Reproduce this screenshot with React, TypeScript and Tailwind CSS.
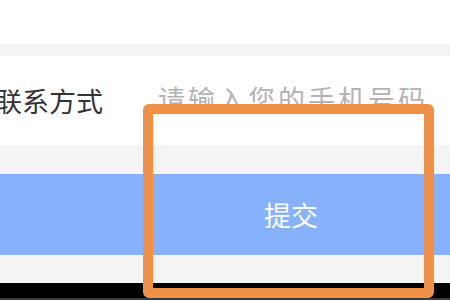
import React from "react";

function ContactRow() {
  return (
    <div className="flex h-[89px] items-center bg-white">
      <span className="ml-[-5px] w-[163px] shrink-0 text-[27px] leading-none text-[#333333]">
        联系方式
      </span>
      <span className="mt-[-4px] whitespace-nowrap text-[27px] leading-none tracking-[3px] text-[#b3b3b3]">
        请输入您的手机号码
      </span>
    </div>
  );
}

function SubmitButton() {
  return (
    <div className="flex h-[81px] items-center bg-[#87b1fb] pl-[264px]">
      <span className="text-[27px] leading-none text-white">提交</span>
    </div>
  );
}

export default function App() {
  return (
    <div
      className="relative h-[300px] w-[450px] overflow-hidden bg-white"
      style={{ fontFamily: '"Noto Sans CJK SC", "Noto Sans", sans-serif' }}
    >
      <div className="h-[44px] bg-white" />
      <div className="h-[12px] bg-[#f4f4f4]" />
      <ContactRow />
      <div className="h-[29px] bg-[#f4f4f4]" />
      <SubmitButton />
      <div className="h-[28px] bg-[#f4f4f4]" />
      <div className="h-[15px] bg-black" />
      <div className="h-[3px] bg-[#3a3a3a]" />

      {/* annotation frame drawn over the screenshot */}
      <div className="absolute left-[143px] top-[104px] h-[194px] w-[291px] rounded-[6px] border-[10px] border-[#f0914a]" />
    </div>
  );
}
